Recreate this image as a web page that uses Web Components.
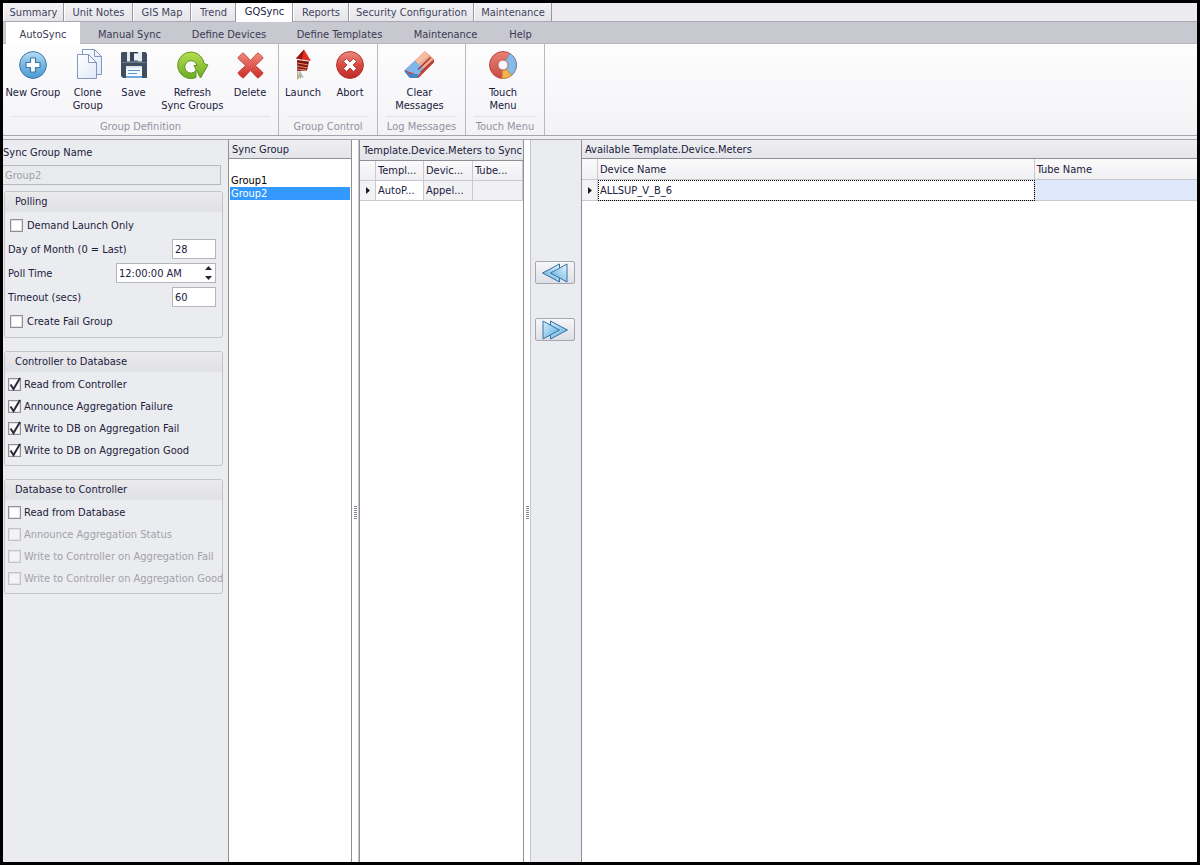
<!DOCTYPE html>
<html lang="en">
<head>
<meta charset="utf-8">
<title>GQSync - AutoSync</title>
<style>
  html, body { height: 100%; margin: 0; }
  body { background: #000; font: 11px/13px "DejaVu Sans Condensed", "DejaVu Sans", sans-serif; color: #20203c; }
</style>
</head>
<body>
<sync-app></sync-app>
<script>
const BASE = `
  *, *::before { box-sizing: border-box; }
  button, input, select { font: inherit; color: inherit; margin: 0; }
`;
function define(name, html, setup) {
  customElements.define(name, class extends HTMLElement {
    constructor() {
      super();
      const t = document.createElement('template');
      t.innerHTML = '<style>' + BASE + '</style>' + html;
      this.attachShadow({ mode: 'open' }).append(t.content.cloneNode(true));
    }
    connectedCallback() { if (setup) setup(this, this.shadowRoot); }
  });
}

/* Tabs: items are "Label:width", the selected index is separate */
function fillTabs(host, root) {
  const nav = root.querySelector('nav');
  const sel = Number(host.getAttribute('selected'));
  nav.replaceChildren(...host.getAttribute('items').split('|').map((item, i) => {
    const [label, width] = item.split(':');
    const b = document.createElement('button');
    b.textContent = label;
    b.style.minWidth = width + 'px';
    if (i === sel) { b.className = 'on'; b.setAttribute('aria-current', 'page'); }
    return b;
  }));
}
define('module-tabs', `<style>
  :host { display: block; background: #ececf0; border-bottom: 1px solid #a9a9b3; height: 19px; }
  nav { display: flex; }
  button { height: 18px; padding: 0; border: 0; border-right: 1px solid #96969f; border-left: 1px solid #fff; background: linear-gradient(#f4f4f7, #e4e4e9); color: #43435c; white-space: nowrap; }
  button.on { background: #fff; height: 19px; color: #20203c; padding-bottom: 3px; }
</style><nav></nav>`, fillTabs);
define('page-tabs', `<style>
  :host { display: block; background: #c8c8d0; border-bottom: 1px solid #b4b4bd; height: 22px; padding-left: 3px; }
  nav { display: flex; }
  button { height: 22px; padding: 2px 0 0; border: 0; background: none; color: #3a3a52; white-space: nowrap; }
  button.on { background: #fff; }
</style><nav></nav>`, fillTabs);

define('ribbon-button', `<style>
  :host { display: block; }
  button { display: flex; flex-direction: column; align-items: center; gap: 7px; width: 100%; padding: 0; border: 0; background: none; }
  ::slotted(svg) { display: block; width: 28px; height: 28px; overflow: visible; }
  .text { white-space: pre; text-align: center; }
</style><button><slot name="icon"></slot><span class="text"><slot></slot></span></button>`);

define('ribbon-group', `<style>
  :host { display: flex; flex-direction: column; justify-content: space-between; border-right: 1px solid #b9b9c2; padding: 7px 0 2px; }
  .items { display: flex; align-items: flex-start; justify-content: center; padding-right: var(--inset, 4px); }
  .cap { margin: 0 8px; border-top: 1px solid #e3e3e8; padding-top: 3px; text-align: center; color: #9292a0; white-space: nowrap; }
</style><div class="items"><slot></slot></div><div class="cap"></div>`,
(h, r) => { r.querySelector('.cap').textContent = h.getAttribute('caption'); });

define('ribbon-bar', `<style>
  :host { display: flex; height: 92px; background: linear-gradient(#fdfdfe, #f3f3f6); border-bottom: 1px solid #a4a4ae; }
  ribbon-group { flex: none; }
</style>
<ribbon-group caption="Group Definition" style="width:276px;--inset:8px">
  <ribbon-button style="width:60px">New Group<svg slot="icon" viewBox="0 0 28 28"><defs><linearGradient id="a" x2="0" y2="1"><stop stop-color="#b5dcf3"/><stop offset=".5" stop-color="#78b8e2"/><stop offset="1" stop-color="#4c9bd2"/></linearGradient></defs><circle cx="14" cy="14" r="13.4" fill="url(#a)" stroke="#4279ad"/><path d="M11.500 7h5v4.500H21v5h-4.500V21h-5v-4.500H7v-5h4.500z" fill="#fff" stroke="#4178aa" stroke-width="1.2" stroke-linejoin="round"/></svg></ribbon-button>
  <ribbon-button style="width:50px">Clone
Group<svg slot="icon" viewBox="0 0 28 28"><defs><linearGradient id="p" x2="1" y2="1"><stop stop-color="#fff"/><stop offset="1" stop-color="#dfe8f9"/></linearGradient></defs><g fill="url(#p)" stroke="#8496c2" stroke-linejoin="round"><path d="M8.500 -1.500h12l7 7v18h-19z"/><path d="M20.500 -1.500v7h7z"/><path d="M3.500 3.500h11l8 8v16h-19z"/><path d="M14.500 3.500v8h8z" fill="#fff"/></g></svg></ribbon-button>
  <ribbon-button style="width:42px">Save<svg slot="icon" viewBox="0 0 28 28"><path d="M2 1h23.500L27 2.500V27H3l-2-2V2z" fill="#3f4e61"/><path d="M2 11h24v1H2z" fill="#66768b"/><path d="M7 1h15v9.500H7z" fill="#e8ecf1"/><path d="M10 1h8v9.500h-8z" fill="#35445a"/><path d="M14 2.500h4v7h-4z" fill="#eef2f6"/><path d="M6 15h16v12H6z" fill="#f4f7fb"/><path d="M6 15h16v2H6z" fill="#dfe5ec"/><path d="M8 19.500h12M8 22.500h9" stroke="#5597d3"/><path d="M6 25h16v2H6z" fill="#6ea9df"/></svg></ribbon-button>
  <ribbon-button style="width:76px">Refresh
Sync Groups<svg slot="icon" viewBox="0 0 28 28"><defs><linearGradient id="g" x2="0" y2="1"><stop stop-color="#b6de52"/><stop offset="1" stop-color="#6dab22"/></linearGradient></defs><path d="M26 12.500A13.200 13.200 0 1 0 18 26.500V19.500A6.200 6.200 0 1 1 19 14.500h-3L22.500 27 30 14z" fill="url(#g)" stroke="#5c941c" stroke-linejoin="round"/></svg></ribbon-button>
  <ribbon-button style="width:40px">Delete<svg slot="icon" viewBox="0 0 28 28"><defs><linearGradient id="r" x2="0" y2="1"><stop stop-color="#ee8a7e"/><stop offset="1" stop-color="#cd2c26"/></linearGradient></defs><path d="M2.500 6L6 2.500q1-1 2 0l6.500 7L21 2.500q1-1 2 0L26.500 6q1 1 0 2l-7 6.500 7 6.500q1 1 0 2L23 26.500q-1 1-2 0l-6.500-7-6.500 7q-1 1-2 0L2.500 23q-1-1 0-2l7-6.500L2.500 8q-1-1 0-2z" fill="url(#r)" stroke="#b8352f" stroke-width=".8"/></svg></ribbon-button>
</ribbon-group>
<ribbon-group caption="Group Control" style="width:99px;--inset:2px">
  <ribbon-button style="width:46px">Launch<svg slot="icon" viewBox="0 0 28 28"><path d="M8.500 18v10.500M10.500 20L9 28" stroke="#c4a98a" fill="none"/><path d="M11 20l4 7-2.500-1-1 2-1.500-2-1 1z" fill="#a9b8a0"/><path d="M8 9l12 1.500-2 9-9.500.5z" fill="#7b1717"/><path d="M8.500 12l11 2M8.500 15l10 2M9 18l8 1" stroke="#ee8a5a" stroke-width="1.200"/><path d="M15 -1.500L22 10 7 7.500z" fill="#e03020"/><path d="M15 -1.500L7 7.500l6 1z" fill="#9c1512"/></svg></ribbon-button>
  <ribbon-button style="width:48px">Abort<svg slot="icon" viewBox="0 0 28 28"><defs><linearGradient id="b" x2="0" y2="1"><stop stop-color="#ef9083"/><stop offset=".5" stop-color="#d84a40"/><stop offset="1" stop-color="#bf2b26"/></linearGradient></defs><circle cx="14" cy="14" r="13.400" fill="url(#b)" stroke="#b5332d"/><path d="M7.500 10.500l3-3 3.500 3.500 3.500-3.500 3 3L17 14l3.500 3.500-3 3L14 17l-3.500 3.500-3-3L11 14z" fill="#fff" stroke="#a8302c" stroke-width=".8" stroke-linejoin="round"/></svg></ribbon-button>
</ribbon-group>
<ribbon-group caption="Log Messages" style="width:88px">
  <ribbon-button style="width:80px">Clear
Messages<svg slot="icon" viewBox="0 0 28 28"><path d="M-1 19q-1 1 0 2l4 5q1 1 3 1h5q1.500 0 2.500-1L28 11.500V8.500L20 1q-1-.8-2 0z" fill="#c9463c"/><path d="M-.5 19L18 1q1-.8 2 0l8 8-16 15z" fill="#f0a88c"/><path d="M-1 19L9 9.500l9.500 9L12 24z" fill="#7db5ec"/><path d="M9 9.500L18 1q1-.8 2 0l3 3L12.500 13z" fill="#f5bda2"/><path d="M-1 19l5 4h7.500l1 3q-1 1-2 1H6q-2 0-3-1l-4-5q-1-1 0-2z" fill="#4485cc"/><path d="M12 18.500L24.500 6.500M14.500 21.500L27.500 9.500" stroke="#a63a33" stroke-width="1.500"/></svg></ribbon-button>
</ribbon-group>
<ribbon-group caption="Touch Menu" style="width:79px">
  <ribbon-button style="width:72px">Touch
Menu<svg slot="icon" viewBox="0 0 28 28"><defs><linearGradient id="t" x2="0" y2="1"><stop stop-color="#e98075"/><stop offset="1" stop-color="#c94b42"/></linearGradient></defs><circle cx="14" cy="14" r="13.500" fill="url(#t)" stroke="#b64a42"/><path d="M14 14l7-11.500a13.500 13.500 0 0 1 1.500 21.800z" fill="#85bbe5" stroke="#5a97c9" stroke-width=".7"/><path d="M14 14l8.500 10.300A13.500 13.500 0 0 1 13 27.500z" fill="#f2b24c" stroke="#cf8d36" stroke-width=".7"/><circle cx="14" cy="14" r="5" fill="#f8f8fa" stroke="#b46a68"/></svg></ribbon-button>
</ribbon-group>`);

define('check-box', `<style>
  :host { display: flex; align-items: center; height: var(--row, 22px); }
  label { display: flex; align-items: center; gap: var(--gap, 3px); white-space: nowrap; }
  .box { position: relative; display: block; width: 13px; height: 13px; }
  input { appearance: none; display: block; width: 13px; height: 13px; border: 1px solid #8e8f98; background: #fff; box-shadow: inset 0 0 0 1px #e2e2e6; }
  svg { display: none; position: absolute; inset: 0; width: 13px; height: 13px; overflow: visible; pointer-events: none; }
  input:checked + svg { display: block; }
  input:disabled { border-color: #c3c3c9; background: #f4f4f6; }
  label:has(:disabled) { color: #a2a2ab; }
</style><label><span class="box"><input type="checkbox"><svg viewBox="0 0 13 13"><path d="M2.500 6.500l3 4.500L12 0" fill="none" stroke="#2c2c3a" stroke-width="2"/></svg></span><slot></slot></label>`,
(h, r) => { const i = r.querySelector('input'); i.checked = h.hasAttribute('checked'); i.disabled = h.hasAttribute('disabled'); });

define('group-box', `<style>
  :host { display: block; border: 1px solid #c3c3c9; border-radius: 3px; }
  h2 { margin: 0; height: 20px; padding: 0 10px; font: inherit; line-height: 20px; background: linear-gradient(#ebebee, #dfe0e4); border-bottom: 1px solid #e4e4e8; }
  .body { padding: 1px 3px 4px; }
</style><h2></h2><div class="body"><slot></slot></div>`,
(h, r) => { r.querySelector('h2').textContent = h.getAttribute('caption'); });

define('text-field', `<style>
  :host { display: block; height: 24px; }
  label { display: flex; align-items: center; justify-content: space-between; height: 100%; white-space: nowrap; padding-right: 3px; }
  .wrap { position: relative; width: var(--w, 44px); }
  input { display: block; width: 100%; height: 20px; padding: 0 2px; border: 1px solid #b4b5bc; background: #fff; outline: 0; border-radius: 0; }
  svg { display: none; position: absolute; right: 4px; top: 3px; width: 7px; height: 14px; }
  :host([spin]) svg { display: block; }
</style><label><slot></slot><span class="wrap"><input type="text"><svg viewBox="0 0 7 14"><path d="M0 4L3.500 0 7 4zM0 10l3.500 4L7 10z" fill="#26263a"/></svg></span></label>`,
(h, r) => { r.querySelector('input').value = h.getAttribute('value'); });

define('sync-settings', `<style>
  :host { display: block; background: #ebecef; padding: 6px 5px 0 0; }
  .name { display: block; line-height: 14px; }
  .name input { display: block; width: 218px; height: 20px; margin-top: 5px; padding: 0 2px; border: 1px solid #b9bac1; border-left: 0; background: #e9eaed; color: #a0a0aa; border-radius: 0; }
  group-box { margin: 6px 0 0 1px; }
  group-box + group-box { margin-top: 13px; }
  .poll check-box { --row: 24px; --gap: 4px; padding-left: 2px; }
</style>
<label class="name">Sync Group Name<input value="Group2" disabled></label>
<group-box class="poll" caption="Polling">
  <check-box>Demand Launch Only</check-box>
  <text-field value="28">Day of Month (0 = Last)</text-field>
  <text-field value="12:00:00 AM" spin style="--w:100px">Poll Time</text-field>
  <text-field value="60">Timeout (secs)</text-field>
  <check-box>Create Fail Group</check-box>
</group-box>
<group-box caption="Controller to Database">
  <check-box checked>Read from Controller</check-box>
  <check-box checked>Announce Aggregation Failure</check-box>
  <check-box checked>Write to DB on Aggregation Fail</check-box>
  <check-box checked>Write to DB on Aggregation Good</check-box>
</group-box>
<group-box caption="Database to Controller">
  <check-box>Read from Database</check-box>
  <check-box disabled>Announce Aggregation Status</check-box>
  <check-box disabled>Write to Controller on Aggregation Fail</check-box>
  <check-box disabled>Write to Controller on Aggregation Good</check-box>
</group-box>`);

define('panel-box', `<style>
  :host { display: flex; flex-direction: column; min-width: 0; background: #fff; border: 0 solid #8f9097; border-width: 0 1px; }
  h2 { flex: none; margin: 0; height: var(--head, 19px); padding: 0 3px; font: inherit; line-height: var(--head, 19px); white-space: nowrap; overflow: hidden; background: linear-gradient(#efeff2, #e4e5e9); border-bottom: 1px solid #8f9097; }
  .body { flex: 1; min-height: 0; }
</style><h2></h2><div class="body"><slot></slot></div>`,
(h, r) => { r.querySelector('h2').textContent = h.getAttribute('caption'); });

define('group-list', `<style>
  :host { display: block; padding: 15px 1px 0; color: #000; }
  ul { margin: 0; padding: 0; list-style: none; }
  li { height: 13px; padding: 0 1px; }
  li[aria-selected=true] { background: #3399ff; color: #fff; }
</style><ul role="listbox" aria-label="Sync Group"><li role="option">Group1</li><li role="option" aria-selected="true">Group2</li></ul>`);

define('split-grip', `<style>
  :host { display: flex; align-items: center; justify-content: center; background: #fff; border-right: 1px solid #c4c4cb; cursor: col-resize; }
  i { width: 3px; height: 13px; margin-top: 22px; background: repeating-linear-gradient(#85858f 0 1px, #fff 1px 2px); }
</style><i></i>`);

const GRID = `
  :host { display: block; }
  table { width: 100%; border-collapse: separate; border-spacing: 0; table-layout: fixed; }
  th, td { height: 20px; padding: 0 2px; font-weight: normal; text-align: left; white-space: nowrap; overflow: hidden; text-overflow: ellipsis; border-right: 1px solid #c9c9d0; border-bottom: 1px solid #c9c9d0; }
  th { background: linear-gradient(#fafafb, #f0f0f3); }
  .mark { padding: 0 0 0 6px; background: #f3f3f6; }
  svg { display: block; width: 4px; height: 7px; }
`;
const MARK = '<td class="mark"><svg viewBox="0 0 4 7"><path d="M0 0l4 3.500L0 7z" fill="#1c1c2c"/></svg></td>';
define('meters-grid', `<style>${GRID}
  td { background: #f1f1f4; }
  td.cur { background: #fff; }
</style><table><colgroup><col style="width:16px"><col style="width:48px"><col style="width:49px"><col></colgroup>
<thead><tr><th></th><th>Templ...</th><th>Devic...</th><th>Tube...</th></tr></thead>
<tbody><tr>${MARK}<td class="cur">AutoP...</td><td>Appel...</td><td></td></tr></tbody></table>`);
define('available-grid', `<style>${GRID}
  th, td { height: 21px; }
  td { background: #dfe8fb; }
  td.mark { background: #f3f3f6; }
  td.cur { background: #fff; outline: 1px dotted #000; outline-offset: -1px; }
  th:last-child, td:last-child { border-right: 0; }
</style><table><colgroup><col style="width:16px"><col style="width:71%"><col></colgroup>
<thead><tr><th></th><th>Device Name</th><th>Tube Name</th></tr></thead>
<tbody><tr>${MARK}<td class="cur">ALLSUP_V_B_6</td><td></td></tr></tbody></table>`);

define('transfer-buttons', `<style>
  :host { display: flex; flex-direction: column; align-items: center; gap: 34px; background: #ebecef; padding: 121px 2px 0 0; }
  button { display: flex; align-items: center; justify-content: center; width: 40px; height: 23px; padding: 0; border: 1px solid #a6a7b0; border-radius: 2px; background: linear-gradient(#f7f7f9, #dedfe5); }
  svg { display: block; width: 28px; height: 20px; }
  .next svg { transform: rotate(180deg); }
</style>
<button aria-label="Add to sync"><svg viewBox="0 0 28 20"><defs><linearGradient id="l" x1="1" x2="0" y2="1"><stop stop-color="#e6f7fd"/><stop offset="1" stop-color="#54a9dc"/></linearGradient></defs><g fill="url(#l)" stroke="#3a6ea5" stroke-linejoin="round"><path d="M18.500 1v18L1.500 10z"/><path d="M26 1v18L9.500 10z"/></g></svg></button>
<button class="next" aria-label="Remove from sync"><svg viewBox="0 0 28 20"><defs><linearGradient id="m" x1="0" x2="1" y2="1"><stop stop-color="#54a9dc"/><stop offset="1" stop-color="#d6f1fb"/></linearGradient></defs><g fill="url(#m)" stroke="#3a6ea5" stroke-linejoin="round"><path d="M18.500 1v18L1.500 10z"/><path d="M26 1v18L9.500 10z"/></g></svg></button>`);

define('sync-app', `<style>
  :host { display: flex; flex-direction: column; box-sizing: border-box; height: 100vh; padding: 3px; background: #000; }
  module-tabs, page-tabs, ribbon-bar { flex: none; }
  main { flex: 1; min-height: 0; display: grid; grid-template-columns: 225px 124px 7px 165px 7px 50px minmax(0, 1fr); border-top: 1px solid #a4a4ae; box-shadow: 0 -3px #f1f1f4; margin-top: 3px; }
  .meters { --head: 21px; }
  .avail { border-right: 0; }
</style>
<module-tabs selected="4" items="Summary:61|Unit Notes:69|GIS Map:58|Trend:45|GQSync:57|Reports:56|Security Configuration:125|Maintenance:78"></module-tabs>
<page-tabs selected="0" items="AutoSync:74|Manual Sync:99|Define Devices:100|Define Templates:121|Maintenance:91|Help:59"></page-tabs>
<ribbon-bar></ribbon-bar>
<main>
  <sync-settings></sync-settings>
  <panel-box caption="Sync Group"><group-list></group-list></panel-box>
  <split-grip></split-grip>
  <panel-box class="meters" caption="Template.Device.Meters to Sync"><meters-grid></meters-grid></panel-box>
  <split-grip></split-grip>
  <transfer-buttons></transfer-buttons>
  <panel-box class="avail" caption="Available Template.Device.Meters"><available-grid></available-grid></panel-box>
</main>`);
</script>
</body>
</html>
